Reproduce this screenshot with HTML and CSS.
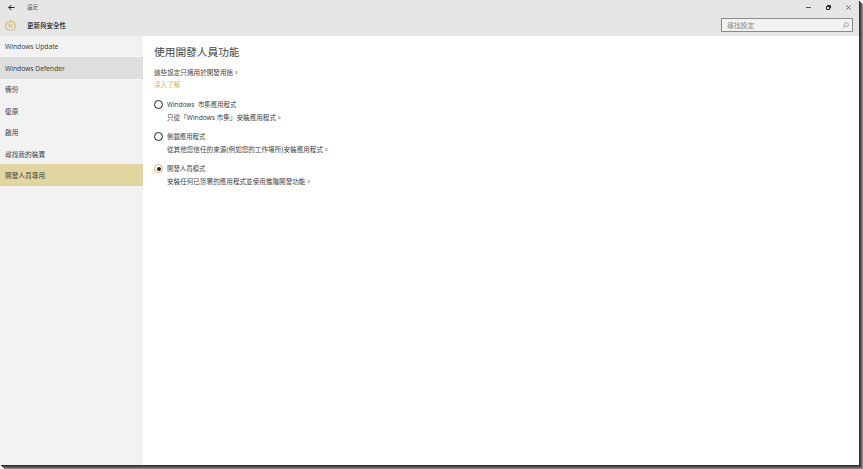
FILE: index.html
```html
<!DOCTYPE html>
<html lang="zh-Hant">
<head>
  <meta charset="UTF-8">
  <title>設定</title>
  <link rel="stylesheet" href="styles.css">
</head>
<body>
  <div class="window">
    <header class="header">
      <div class="titlebar">
        <svg class="back" width="7" height="7" viewBox="0 0 7 7"><path d="M6.500 3.500H.8M3.200 1 .8 3.500 3.200 6" fill="none" stroke="#222" stroke-width="1"/></svg>
        <span class="app-name">設定</span>
        <div class="controls">
          <svg width="5" height="5" viewBox="0 0 5 5"><path d="M0 2.500h5" stroke="#555" stroke-width="1"/></svg>
          <svg width="5" height="5" viewBox="0 0 5 5"><path d="M1.500 1V.5h3v2.500H4M.5 1.500h3v3h-3z" fill="none" stroke="#222" stroke-width="1"/></svg>
          <svg width="5" height="5" viewBox="0 0 5 5"><path d="M.5.5l4 4M4.500.5l-4 4" stroke="#555" stroke-width=".9"/></svg>
        </div>
      </div>
      <div class="subbar">
        <svg class="gear" width="11" height="11" viewBox="0 0 13 13"><circle cx="6.500" cy="6.500" r="2" fill="none" stroke="#d0b64f" stroke-width="1.100"/><path d="M5.500.7h2l.3 1.600 1.100.5 1.400-.9 1.400 1.400-.9 1.400.5 1.100 1.600.3v2l-1.600.3-.5 1.100.9 1.400-1.400 1.400-1.400-.9-1.100.5-.3 1.600h-2l-.3-1.600-1.100-.5-1.400.9-1.400-1.400.9-1.400-.5-1.100-1.600-.3v-2l1.600-.3.5-1.100-.9-1.400 1.400-1.400 1.400.9 1.100-.5z" fill="none" stroke="#d0b64f" stroke-width="1.100"/></svg>
        <span class="section-name">更新與安全性</span>
        <div class="search">
          <span>尋找設定</span>
          <svg width="7" height="7" viewBox="0 0 7 7"><circle cx="4.300" cy="2.700" r="2.100" fill="none" stroke="#999" stroke-width=".8"/><path d="M2.800 4.200.6 6.500" stroke="#999" stroke-width=".8"/></svg>
        </div>
      </div>
    </header>
    <div class="body">
      <nav class="sidebar">
        <div class="nav-item">Windows Update</div>
        <div class="nav-item hover">Windows Defender</div>
        <div class="nav-item">備份</div>
        <div class="nav-item">復原</div>
        <div class="nav-item">啟用</div>
        <div class="nav-item">尋找我的裝置</div>
        <div class="nav-item selected">開發人員專用</div>
      </nav>
      <main class="content">
        <h1>使用開發人員功能</h1>
        <p class="note">這些設定只適用於開發用途。</p>
        <a class="link">深入了解</a>
        <div class="options">
          <div class="option">
            <div class="option-label"><span class="radio"></span>Windows 市集應用程式</div>
            <div class="option-desc">只從「Windows 市集」安裝應用程式。</div>
          </div>
          <div class="option">
            <div class="option-label"><span class="radio"></span>側載應用程式</div>
            <div class="option-desc tight">從其他您信任的來源 (例如您的工作場所) 安裝應用程式。</div>
          </div>
          <div class="option">
            <div class="option-label"><span class="radio checked"></span>開發人員模式</div>
            <div class="option-desc">安裝任何已簽署的應用程式並使用進階開發功能。</div>
          </div>
        </div>
      </main>
    </div>
  </div>
</body>
</html>
```
FILE: styles.css
```css
* {
  box-sizing: border-box;
}

html, body {
  height: 100%;
  margin: 0;
  overflow: hidden;
}

body {
  background: #fff;
  font-family: "Noto Sans", "Noto Sans CJK TC", sans-serif;
  color: #444;
}

.window {
  width: 859px;
  height: 465px;
  display: flex;
  flex-direction: column;
  background: #fff;
  box-shadow: 1px 1px 0 #333, 2px 2px 0 #444, 3px 3px 0 #666, 4px 4px 0 #888;
}

.header {
  height: 36px;
  background: #e6e6e6;
  flex: none;
}

.titlebar {
  height: 14px;
  display: flex;
  align-items: center;
}

.back {
  margin-left: 8px;
}

.app-name {
  margin-left: 12px;
  font-size: 5.500px;
}

.controls {
  margin-left: auto;
  display: flex;
  gap: 15px;
  padding-right: 8px;
}

.subbar {
  height: 22px;
  display: flex;
  align-items: center;
}

.gear {
  margin-left: 5px;
}

.section-name {
  margin-left: 11px;
  font-size: 6.500px;
  font-weight: 500;
  color: #222;
}

.search {
  margin-left: auto;
  margin-right: 6px;
  width: 132px;
  height: 14px;
  border: 1px solid #8a8a8a;
  background: #f2f2f2;
  display: flex;
  align-items: center;
  justify-content: space-between;
  padding: 0 3px 0 5px;
  font-size: 6.800px;
  color: #888;
}

.body {
  flex: 1;
  display: flex;
  min-height: 0;
}

.sidebar {
  width: 143px;
  background: #f2f2f2;
  flex: none;
}

.nav-item {
  height: 21.400px;
  display: flex;
  align-items: center;
  padding-left: 5px;
  font-size: 6.700px;
}

.nav-item.hover {
  background: #dedede;
}

.nav-item.selected {
  background: #e2d6a0;
}

.content {
  flex: 1;
  padding: 9px 0 0 11px;
}

h1 {
  margin: 0;
  font-size: 10.700px;
  line-height: 15px;
  font-weight: 400;
}

.note {
  margin: 8px 0 0;
  font-size: 6.600px;
  line-height: 10px;
}

.link {
  display: block;
  margin-top: 2px;
  font-size: 6.600px;
  line-height: 10px;
  color: #d0b64f;
}

.options {
  margin-top: 9px;
  display: flex;
  flex-direction: column;
  gap: 8px;
}

.option-label {
  display: flex;
  align-items: center;
  height: 11px;
  font-size: 6.400px;
  word-spacing: 2px;
}

.radio {
  width: 9px;
  height: 9px;
  margin-right: 4px;
  border: 1.200px solid #222;
  border-radius: 50%;
  background: #fff;
  display: flex;
  align-items: center;
  justify-content: center;
}

.radio.checked {
  border-color: #d0b64f;
}

.radio.checked::after {
  content: "";
  width: 4px;
  height: 4px;
  border-radius: 50%;
  background: #222;
}

.option-desc {
  margin-top: 3px;
  padding-left: 13px;
  font-size: 6.600px;
  line-height: 10px;
}

.option-desc.tight {
  word-spacing: -1.500px;
}
```
